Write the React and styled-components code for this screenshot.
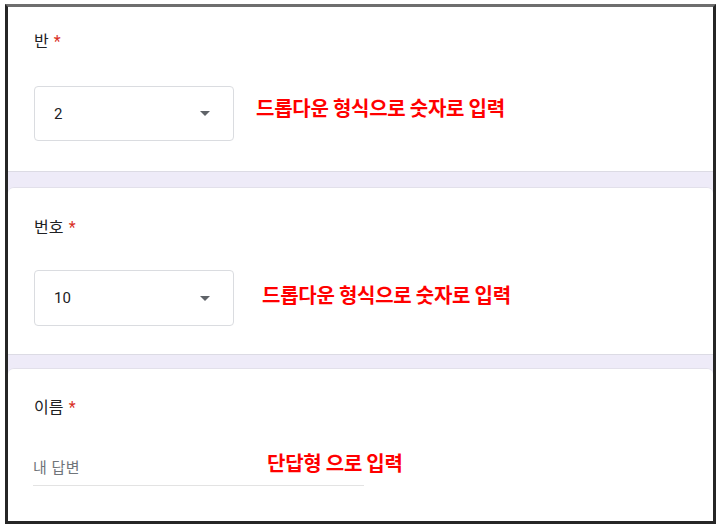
import React from "react";
import styled, { createGlobalStyle } from "styled-components";

const GlobalStyle = createGlobalStyle`
  html, body {
    margin: 0;
    padding: 0;
    background: #ffffff;
  }
  body {
    font-family: Roboto, "Noto Sans CJK KR", sans-serif;
  }
`;

const Frame = styled.div`
  margin: 4px 0 0 5px;
  width: 705px;
  height: 514px;
  border: 3px solid #262626;
  border-top-color: #6e6e6e;
  background: #eeebf8;
  display: flex;
  flex-direction: column;
  overflow: hidden;
`;

const Card = styled.section`
  position: relative;
  box-sizing: border-box;
  height: ${p => (p.$height ? `${p.$height}px` : "auto")};
  flex: ${p => (p.$height ? "none" : "1")};
  margin-top: ${p => p.$gap || 0}px;
  padding: ${p => p.$top}px 26px 0 26px;
  background: #ffffff;
  border-top: ${p => (p.$gap ? "1px solid #e2e0ea" : "none")};
  border-bottom: ${p => (p.$last ? "none" : "1px solid #dcdbe4")};
  border-radius: ${p => (p.$gap ? "6px 6px 0 0" : "0")};
`;

const Label = styled.div`
  font-size: 16px;
  line-height: 24px;
  color: #202124;
  letter-spacing: 0.1px;
`;

const Star = styled.span`
  color: #d93025;
  margin-left: 5px;
`;

const Row = styled.div`
  display: flex;
  align-items: center;
  margin-top: ${p => p.$gap}px;
`;

const Dropdown = styled.div`
  box-sizing: border-box;
  width: 200px;
  height: ${p => p.$h}px;
  border: 1px solid #dadce0;
  border-radius: 4px;
  display: flex;
  align-items: center;
  justify-content: space-between;
  padding: 0 23px 0 19px;
  font-size: 15px;
  color: #202124;
  background: #fff;
`;

const Caret = styled.span`
  width: 0;
  height: 0;
  border-left: 5px solid transparent;
  border-right: 5px solid transparent;
  border-top: 5px solid #5f6368;
`;

const Note = styled.div`
  margin-left: ${p => p.$left}px;
  margin-top: ${p => p.$shift}px;
  font-family: "Noto Sans CJK KR", sans-serif;
  font-weight: 700;
  font-size: 20px;
  line-height: 26px;
  color: #ff0000;
  letter-spacing: -0.25px;
  white-space: nowrap;
`;

const OverlayNote = styled(Note)`
  position: absolute;
  left: 259px;
  top: 81px;
  margin: 0;
`;

const TextInput = styled.div`
  width: 331px;
  margin-top: 37px;
  margin-left: -1px;
  padding-bottom: 6px;
  border-bottom: 1px solid #e3e3e3;
  font-size: 15px;
  line-height: 22px;
  color: #70757a;
  letter-spacing: 0.5px;
`;

export default function App() {
  return (
    <>
      <GlobalStyle />
      <Frame>
        <Card $height={165} $top={23}>
          <Label>
            반<Star>*</Star>
          </Label>
          <Row $gap={32}>
            <Dropdown $h={55}>
              <span>2</span>
              <Caret />
            </Dropdown>
            <Note $left={22} $shift={-11}>드롭다운 형식으로 숫자로 입력</Note>
          </Row>
        </Card>
        <Card $height={168} $top={28} $gap={15}>
          <Label>
            번호<Star>*</Star>
          </Label>
          <Row $gap={30}>
            <Dropdown $h={56}>
              <span>10</span>
              <Caret />
            </Dropdown>
            <Note $left={28} $shift={-7}>드롭다운 형식으로 숫자로 입력</Note>
          </Row>
        </Card>
        <Card $top={27} $gap={13} $last>
          <Label>
            이름<Star>*</Star>
          </Label>
          <TextInput>내 답변</TextInput>
          <OverlayNote>단답형 으로 입력</OverlayNote>
        </Card>
      </Frame>
    </>
  );
}
